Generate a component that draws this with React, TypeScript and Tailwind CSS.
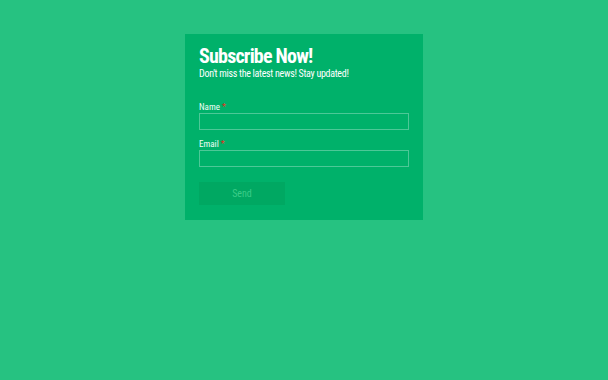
export default function App() {
  return (
    <div className="min-h-[380px] w-full bg-[#26c281] pt-[34px]" style={{ fontFamily: "Roboto, 'Liberation Sans', sans-serif" }}>
      <div className="ml-[185px] w-[238px] h-[186px] bg-[#00b16a] px-[14px] pt-[10px] font-stretch-condensed">
        <h1 className="text-[20px] leading-[24px] font-bold text-white tracking-[-0.8px]">Subscribe Now!</h1>
        <p className="text-[10px] leading-[12px] text-white tracking-[-0.3px]">Don't miss the latest news! Stay updated!</p>
        <form className="mt-[22px] flex flex-col">
          <label className="text-[9px] leading-[10px] font-normal text-[#f0fff7]">
            Name <span className="text-[#e0301e]">*</span>
          </label>
          <input className="mt-[1px] h-[17px] w-[210px] border border-white/30 bg-transparent outline-none" />
          <label className="mt-[9px] text-[9px] leading-[10px] font-normal text-[#f0fff7]">
            Email <span className="text-[#e0301e]">*</span>
          </label>
          <input className="mt-[1px] h-[17px] w-[210px] border border-white/30 bg-transparent outline-none" />
          <button type="button" className="mt-[15px] h-[23px] w-[86px] bg-[#00a862] text-[10px] text-[#3bcc88] font-stretch-condensed">
            Send
          </button>
        </form>
      </div>
    </div>
  );
}
